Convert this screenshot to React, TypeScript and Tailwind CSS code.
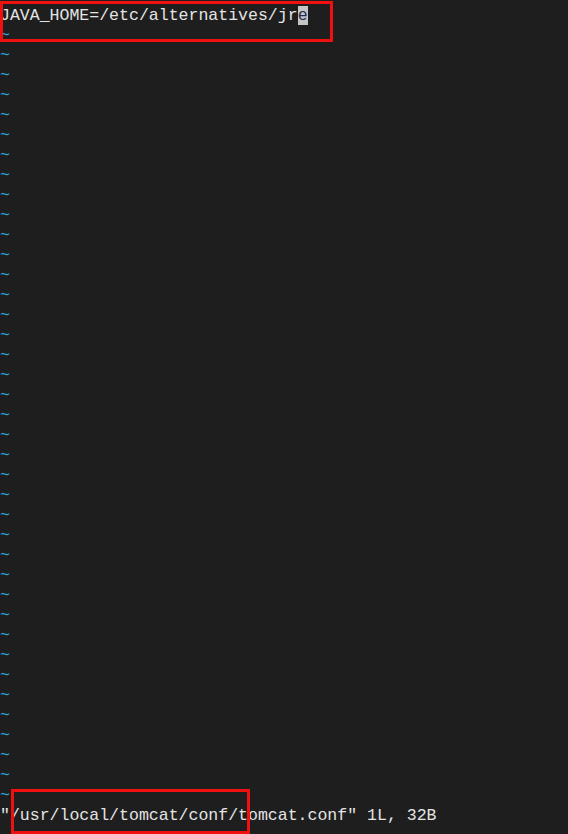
const TILDE_COUNT = 39;

function Tilde() {
  return <div className="h-[20px] text-[#2fa6dc]">~</div>;
}

export default function App() {
  return (
    <div className="relative h-[834px] w-[568px] overflow-hidden bg-[#1e1e1e] font-['Liberation_Mono',monospace] text-[16.55px] leading-[20px] text-[#e4e4e4]">
      <div className="flex flex-col pt-[6px]">
        <div className="h-[20px] whitespace-pre">
          JAVA_HOME=/etc/alternatives/jr
          <span className="bg-[#c6c6c6] text-[#1f2d52]">e</span>
        </div>
        {Array.from({ length: TILDE_COUNT }).map((_, i) => (
          <Tilde key={i} />
        ))}
        <div className="h-[20px] whitespace-pre">
          "/usr/local/tomcat/conf/tomcat.conf" 1L, 32B
        </div>
      </div>

      {/* annotation boxes */}
      <div className="absolute left-0 top-[1px] h-[41px] w-[333px] border-[3px] border-[#f01010]" />
      <div className="absolute left-[11px] top-[789px] h-[45px] w-[239px] border-[3px] border-[#f01010]" />
    </div>
  );
}
